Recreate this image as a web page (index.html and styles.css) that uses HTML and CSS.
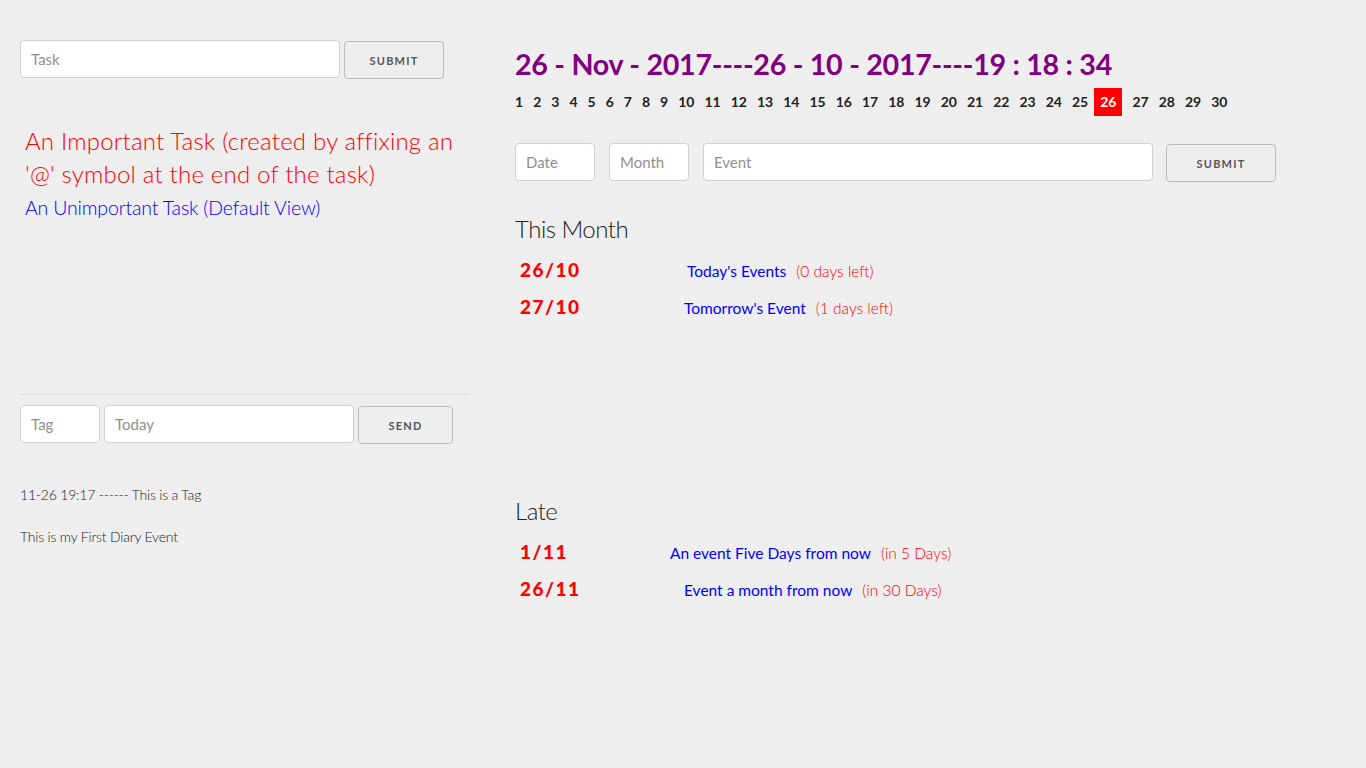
FILE: index.html
```html
<!DOCTYPE html>
<html>
<head>
<meta charset="utf-8">
<title>Diary</title>
<link rel="stylesheet" href="styles.css">
</head>
<body>
<div class="page">
  <div class="left">
    <form class="task-form">
      <input class="input task-input" type="text" placeholder="Task">
      <button class="btn btn-submit" type="button">Submit</button>
    </form>
    <div class="tasks">
      <p class="task important">An Important Task (created by affixing an '@' symbol at the end of the task)</p>
      <p class="task normal">An Unimportant Task (Default View)</p>
    </div>
    <hr class="divider">
    <form class="tag-form">
      <input class="input tag-input" type="text" placeholder="Tag">
      <input class="input today-input" type="text" placeholder="Today">
      <button class="btn btn-send" type="button">Send</button>
    </form>
    <div class="diary">
      <p class="diary-line">11-26 19:17 ------ This is a Tag</p>
      <p class="diary-line">This is my First Diary Event</p>
    </div>
  </div>

  <div class="right">
    <h1 class="clock">26 - Nov - 2017----26 - 10 - 2017----19 : 18 : 34</h1>
    <div class="days">
      <span>1</span><span>2</span><span>3</span><span>4</span><span>5</span><span>6</span><span>7</span><span>8</span><span>9</span><span>10</span><span>11</span><span>12</span><span>13</span><span>14</span><span>15</span><span>16</span><span>17</span><span>18</span><span>19</span><span>20</span><span>21</span><span>22</span><span>23</span><span>24</span><span>25</span><span class="today">26</span><span>27</span><span>28</span><span>29</span><span>30</span>
    </div>
    <form class="event-form">
      <input class="input date-input" type="text" placeholder="Date">
      <input class="input month-input" type="text" placeholder="Month">
      <input class="input event-input" type="text" placeholder="Event">
      <button class="btn btn-event" type="button">Submit</button>
    </form>

    <section class="section this-month">
      <h2 class="section-title">This Month</h2>
      <div class="event-row">
        <span class="ev-date">26/10</span>
        <span class="ev-body ev-a"><span class="ev-name">Today's Events</span><span class="ev-left">(0 days left)</span></span>
      </div>
      <div class="event-row">
        <span class="ev-date">27/10</span>
        <span class="ev-body ev-b"><span class="ev-name">Tomorrow's Event</span><span class="ev-left">(1 days left)</span></span>
      </div>
    </section>

    <section class="section late">
      <h2 class="section-title">Late</h2>
      <div class="event-row">
        <span class="ev-date">1/11</span>
        <span class="ev-body ev-c"><span class="ev-name">An event Five Days from now</span><span class="ev-left">(in 5 Days)</span></span>
      </div>
      <div class="event-row">
        <span class="ev-date">26/11</span>
        <span class="ev-body ev-b"><span class="ev-name">Event a month from now</span><span class="ev-left">(in 30 Days)</span></span>
      </div>
    </section>
  </div>
</div>
</body>
</html>
```

FILE: styles.css
```css
* { box-sizing: border-box; }

html, body {
  margin: 0;
  padding: 0;
  background: #eeeeee;
}

body {
  font-family: "Lato", "Open Sans", sans-serif;
  color: #222;
}

p { margin: 0; }

.page {
  display: flex;
  align-items: flex-start;
  padding-top: 40px;
}

/* ---------- left column ---------- */
.left {
  width: 450px;
  margin-left: 20px;
}

.input {
  height: 38px;
  padding: 6px 10px;
  background: #fff;
  border: 1px solid #d1d1d1;
  border-radius: 4px;
  font-family: inherit;
  font-size: 15px;
  color: #333;
  outline: none;
}
.input::placeholder { color: #8f8f8f; font-weight: 400; }

.btn {
  height: 38px;
  padding: 0 20px;
  background: transparent;
  border: 1px solid #bbb;
  border-radius: 4px;
  font-family: inherit;
  font-size: 11px;
  font-weight: 700;
  letter-spacing: 1.2px;
  text-transform: uppercase;
  color: #555;
  margin-top: 1px;
}

.task-form {
  display: flex;
  gap: 4px;
  margin: 0;
}
.task-input { width: 320px; }
.btn-submit { width: 100px; }

.tasks {
  padding-left: 5px;
  margin-top: 45px;
  height: 270px;
}
.task {
  font-weight: 300;
}
.important {
  color: #ff0000;
  font-size: 24px;
  line-height: 33px;
  letter-spacing: 0.2px;
}
.normal {
  color: #0000ff;
  font-size: 19.5px;
  line-height: 32px;
  margin-top: 2px;
  letter-spacing: -0.15px;
}

.divider {
  margin: 0;
  border: 0;
  border-top: 1px solid #dcdcdc;
}

.tag-form {
  display: flex;
  gap: 4px;
  margin-top: 10px;
}
.tag-input { width: 80px; }
.today-input { width: 250px; }
.btn-send { width: 95px; }

.diary {
  margin-top: 40px;
}
.diary-line {
  font-size: 14px;
  font-weight: 300;
  color: #222;
  line-height: 22px;
  margin-bottom: 20px;
  letter-spacing: -0.2px;
}

/* ---------- right column ---------- */
.right {
  margin-left: 45px;
  flex: 1;
}

.clock {
  margin: 6px 0 0;
  font-size: 28.7px;
  font-weight: 700;
  color: #800080;
  line-height: 36px;
  letter-spacing: -0.3px;
}

.days {
  display: flex;
  align-items: center;
  gap: 10px;
  margin-top: 6px;
  font-size: 14px;
  font-weight: 700;
  color: #222;
  line-height: 18px;
}
.days span { padding: 5px 0; }
.days .today {
  background: #ff0000;
  color: #fff;
  padding: 5px 6px;
  margin-left: -4px;
}

.event-form {
  display: flex;
  margin-top: 27px;
  margin-bottom: 0;
}
.date-input { width: 80px; }
.month-input { width: 80px; margin-left: 14px; }
.event-input { width: 450px; margin-left: 14px; }
.btn-event { width: 110px; margin-left: 13px; }

.section-title {
  margin: 0;
  font-size: 24px;
  font-weight: 300;
  color: #222;
  line-height: 30px;
  letter-spacing: -0.5px;
}
.this-month {
  margin-top: 32px;
  height: 282px;
}

.event-row {
  display: flex;
  align-items: baseline;
  height: 37px;
  padding-left: 5px;
}
.section-title + .event-row { margin-top: 14px; }

.ev-date {
  width: 164px;
  font-size: 19px;
  font-weight: 900;
  color: #ff0000;
  letter-spacing: 1.5px;
}
.ev-body {
  font-size: 15.5px;
}
.ev-a { margin-left: 3px; }
.ev-c { margin-left: -14px; }
.ev-name { color: #0000ff; margin-right: 10px; }
.ev-left { color: #ff0000; font-weight: 300; }
```
